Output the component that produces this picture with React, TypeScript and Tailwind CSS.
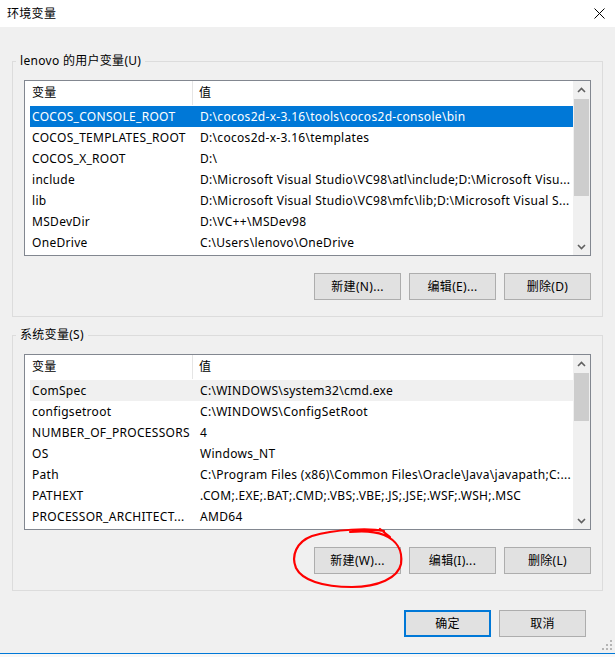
import React from "react"

type Row = { name: string; value: string; state?: "active" | "inactive" }

const userVars: Row[] = [
  { name: "COCOS_CONSOLE_ROOT", value: "D:\\cocos2d-x-3.16\\tools\\cocos2d-console\\bin", state: "active" },
  { name: "COCOS_TEMPLATES_ROOT", value: "D:\\cocos2d-x-3.16\\templates" },
  { name: "COCOS_X_ROOT", value: "D:\\" },
  { name: "include", value: "D:\\Microsoft Visual Studio\\VC98\\atl\\include;D:\\Microsoft Visu..." },
  { name: "lib", value: "D:\\Microsoft Visual Studio\\VC98\\mfc\\lib;D:\\Microsoft Visual S..." },
  { name: "MSDevDir", value: "D:\\VC++\\MSDev98" },
  { name: "OneDrive", value: "C:\\Users\\lenovo\\OneDrive" },
]

const systemVars: Row[] = [
  { name: "ComSpec", value: "C:\\WINDOWS\\system32\\cmd.exe", state: "inactive" },
  { name: "configsetroot", value: "C:\\WINDOWS\\ConfigSetRoot" },
  { name: "NUMBER_OF_PROCESSORS", value: "4" },
  { name: "OS", value: "Windows_NT" },
  { name: "Path", value: "C:\\Program Files (x86)\\Common Files\\Oracle\\Java\\javapath;C:..." },
  { name: "PATHEXT", value: ".COM;.EXE;.BAT;.CMD;.VBS;.VBE;.JS;.JSE;.WSF;.WSH;.MSC" },
  { name: "PROCESSOR_ARCHITECT...", value: "AMD64" },
]

function Chevron({ up }: { up?: boolean }) {
  return (
    <svg width="9" height="6" viewBox="0 0 9 6" className={up ? "" : "rotate-180"}>
      <path d="M1 5 L4.5 1.5 L8 5" fill="none" stroke="#606060" strokeWidth="1.6" />
    </svg>
  )
}

function ScrollBar({ thumbHeight }: { thumbHeight: string }) {
  return (
    <div className="w-[17px] h-full bg-[#f0f0f0] flex flex-col">
      <div className="h-[17px] flex items-center justify-center">
        <Chevron up />
      </div>
      <div className="flex-1 px-[1px]">
        <div className={`mt-[1px] ${thumbHeight} bg-[#cdcdcd]`} />
      </div>
      <div className="h-[17px] flex items-center justify-center">
        <Chevron />
      </div>
    </div>
  )
}

function ListView({ rows, thumbHeight }: { rows: Row[]; thumbHeight: string }) {
  return (
    <div className="ml-[11px] w-[567px] h-[176px] border border-[#828790] bg-white flex">
      <div className="flex-1 min-w-0">
        <div className="h-[24px] flex items-center">
          <div className="w-[168px] h-full pl-[7px] flex items-center border-r border-[#e5e5e5]">变量</div>
          <div className="pl-[6px]">值</div>
        </div>
        <div className="mt-[1px]">
          {rows.map((r) => (
            <div
              key={r.name}
              className={`ml-[5px] h-[21px] flex items-center whitespace-nowrap ${
                r.state === "active" ? "bg-[#0078d7] text-white" : r.state === "inactive" ? "bg-[#f0f0f0]" : ""
              }`}
            >
              <div className="w-[168px] pl-[2px] overflow-hidden">{r.name}</div>
              <div className="flex-1 min-w-0 pl-[2px] overflow-hidden">{r.value}</div>
            </div>
          ))}
        </div>
      </div>
      <ScrollBar thumbHeight={thumbHeight} />
    </div>
  )
}

function Btn({ children, primary }: { children: React.ReactNode; primary?: boolean }) {
  return (
    <button
      className={`w-[87px] h-[27px] bg-[#e1e1e1] flex items-center justify-center ${
        primary ? "border-2 border-[#0078d7]" : "border border-[#adadad]"
      }`}
    >
      {children}
    </button>
  )
}

function Group({
  title,
  rows,
  thumbHeight,
  buttons,
  className,
}: {
  title: string
  rows: Row[]
  thumbHeight: string
  buttons: string[]
  className: string
}) {
  return (
    <fieldset className={`ml-[12px] w-[591px] border border-[#dcdcdc] ${className}`}>
      <legend className="ml-[3px] px-[4px] h-[16px] leading-[16px]">{title}</legend>
      <div className="mt-[11px]">
        <ListView rows={rows} thumbHeight={thumbHeight} />
      </div>
      <div className="mt-[17px] pr-[11px] flex justify-end gap-[8px]">
        {buttons.map((b) => (
          <Btn key={b}>{b}</Btn>
        ))}
      </div>
    </fieldset>
  )
}

export default function App() {
  return (
    <div
      className="relative w-[615px] h-[657px] overflow-hidden bg-[#f0f0f0] text-[12px] tracking-[0.3px] text-black"
      style={{ fontFamily: '"Noto Sans", "Noto Sans CJK SC", sans-serif' }}
    >
      {/* title bar */}
      <div className="h-[27px] bg-white flex items-center justify-between pl-[7px] pr-[10px]">
        <span>环境变量</span>
        <svg width="11" height="11" viewBox="0 0 11 11">
          <path d="M0.5 0.5 L10.5 10.5 M10.5 0.5 L0.5 10.5" stroke="#000" strokeWidth="1" />
        </svg>
      </div>

      <Group
        title="lenovo 的用户变量(U)"
        rows={userVars}
        thumbHeight="h-[97px]"
        buttons={["新建(N)...", "编辑(E)...", "删除(D)"]}
        className="mt-[26px] pb-[16px]"
      />
      <Group
        title="系统变量(S)"
        rows={systemVars}
        thumbHeight="h-[48px]"
        buttons={["新建(W)...", "编辑(I)...", "删除(L)"]}
        className="mt-[10px] pb-[16px]"
      />

      <div className="mt-[19px] pr-[29px] flex justify-end gap-[8px]">
        <Btn primary>确定</Btn>
        <Btn>取消</Btn>
      </div>

      {/* resize grip */}
      <svg className="absolute right-[3px] bottom-[7px]" width="10" height="10" viewBox="0 0 10 10">
        <rect x="8" y="0" width="2" height="2" fill="#b5b5b5" />
        <rect x="4" y="4" width="2" height="2" fill="#b5b5b5" />
        <rect x="8" y="4" width="2" height="2" fill="#b5b5b5" />
        <rect x="0" y="8" width="2" height="2" fill="#b5b5b5" />
        <rect x="4" y="8" width="2" height="2" fill="#b5b5b5" />
        <rect x="8" y="8" width="2" height="2" fill="#b5b5b5" />
      </svg>

      {/* window bottom edge */}
      <div className="absolute left-0 right-0 top-[653px] h-[1px] bg-[#0078d7]" />
      <div className="absolute left-0 right-0 top-[654px] bottom-0 bg-[#f7f7f7]" />

      {/* red hand-drawn annotation */}
      <svg className="absolute inset-0 pointer-events-none" width="615" height="657">
        <path
          d="M384 531 C370 528 335 529 312 536 C296 542 291 556 296 568 C302 580 322 587 352 587 C378 587 398 578 401 564 C403 550 396 540 384 535 C374 531 360 531 350 532 M380 529 L390 537"
          fill="none"
          stroke="#ff0000"
          strokeWidth="2.2"
          strokeLinecap="round"
        />
      </svg>
    </div>
  )
}
